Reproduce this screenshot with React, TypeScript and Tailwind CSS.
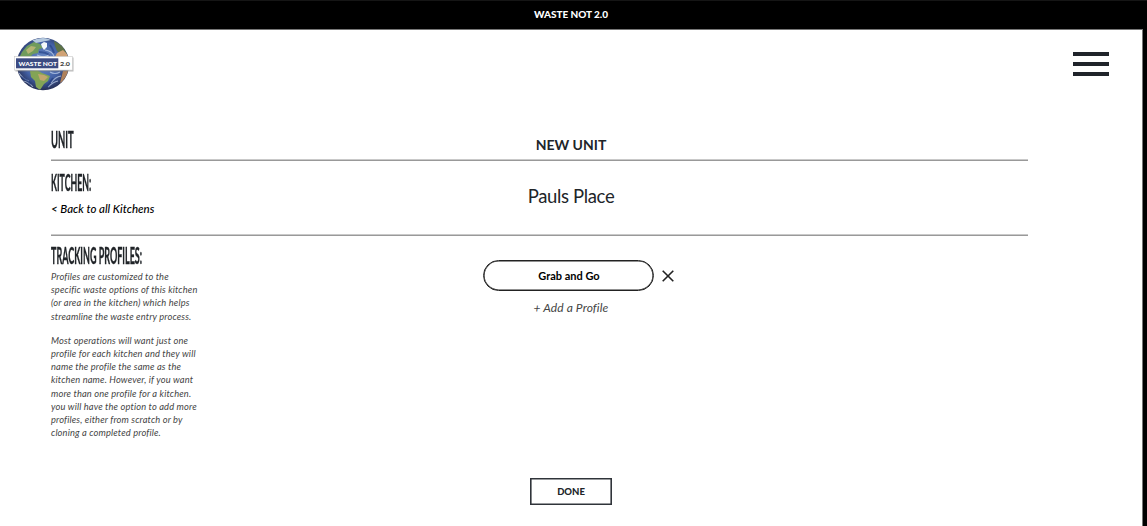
import type { ReactNode } from "react";

function Globe() {
  return (
    <svg viewBox="0 0 60 54" className="h-[54px] w-[60px]" aria-label="Waste Not 2.0">
      <defs>
        <radialGradient id="sea" cx="50%" cy="45%" r="55%">
          <stop offset="0" stopColor="#7394cb" />
          <stop offset="0.65" stopColor="#4361a6" />
          <stop offset="1" stopColor="#262f55" />
        </radialGradient>
        <clipPath id="disc"><circle cx="29" cy="27" r="26" /></clipPath>
        <filter id="soft"><feGaussianBlur stdDeviation="0.5" /></filter>
      </defs>
      <circle cx="29" cy="27" r="26.3" fill="url(#sea)" />
      <g clipPath="url(#disc)">
        <g filter="url(#soft)">
          <path d="M8 15l5-6 7-4 6 2 3 4-4 1-1 4-5 1-3 3-4 1-3 3-4-3z" fill="#6f9b5c" />
          <path d="M12 13l5-4 5 1-3 4-5 3z" fill="#b5b473" />
          <path d="M18 3l8-2 6 0 5 2-5 1-5 1-5 1z" fill="#b5c9de" />
          <path d="M27 7l3-2 3 1 0 4-3 3-2-3z" fill="#f4f8fb" />
          <path d="M40 4l9 5 5 8-6 1-5-4-2-5z" fill="#5d7247" />
          <path d="M43 16l6-3 6 6v6H42l-1-5z" fill="#d0a274" />
          <path d="M16 34l7-1 5 3 8 3-2 5-4 3-4 6-4-3-1-6-4-4z" fill="#83a457" />
          <path d="M24 37l6 1 4 2-4 4-4-1z" fill="#c3a66d" />
          <path d="M49 34l6-1-4 10-5 3z" fill="#ae815b" />
          <path d="M23 18q8 4 13-1M31 13q7 1 9 6M5 36q4 6 10 8M37 46q4-6 10-7M34 50q5-5 10-6M36 35q5 3 10 0M8 44q6 0 11 6" fill="none" stroke="#c4d4ed" strokeWidth="1.1" opacity="0.7" />
          <path d="M25 15q6 0 11 3M36 8q3 4 4 8M7 40q5 2 10 7M39 41l-6 9" fill="none" stroke="#223a80" strokeWidth="2" opacity="0.6" />
        </g>
      </g>
      <rect x="1.5" y="20.5" width="58" height="14" fill="#777" opacity="0.5" />
      <rect x="0.5" y="19.5" width="58" height="13.6" fill="#fff" stroke="#c8c8c8" strokeWidth="0.6" />
      <rect x="2" y="21.3" width="42.3" height="10" fill="#3c4b82" />
      <text x="4.5" y="28.6" textLength="38.5" lengthAdjust="spacingAndGlyphs" fontFamily="Lato, sans-serif" fontWeight="900" fontSize="6.4" fill="#fff">WASTE NOT</text>
      <text x="46" y="28.6" textLength="10" lengthAdjust="spacingAndGlyphs" fontFamily="Lato, sans-serif" fontWeight="900" fontSize="6.4" fill="#444">2.0</text>
    </svg>
  );
}

function Row({ left, children, className }: { left: ReactNode; children: ReactNode; className: string }) {
  return (
    <section className={`grid grid-cols-[152px_736px_89px] ${className}`}>
      <div className="whitespace-nowrap">{left}</div>
      <div className="flex flex-col items-center">{children}</div>
    </section>
  );
}

function Rule() {
  return <div className="h-[2px] w-full border-t border-b border-t-[#c9c9c9] border-b-[#999999]" />;
}

const condensed = "block w-max origin-left text-[22.5px] leading-[22px] font-bold [-webkit-text-stroke:0.4px_#212529]";

export default function App() {
  return (
    <div className="h-[526px] w-[1147px] overflow-hidden bg-black font-['Lato',sans-serif] text-[#212529]">
      <header className="flex h-[29px] items-center justify-center border-t border-t-[#151515] pr-[5px] pb-[2px] text-[10px] font-black tracking-[-0.05px] text-white">
        <span>WASTE NOT 2.0</span>
      </header>
      <div className="h-[497px] w-[1143px] border-t border-r border-t-[#777777] border-r-[#777777] bg-white">
        <nav className="flex h-[94px] justify-between pt-[7px] pr-[33px] pl-[14px]">
          <Globe />
          <div className="flex w-9 flex-col gap-[6px] pt-[15px]">
            <div className="h-1 bg-[#20242a]" />
            <div className="h-1 bg-[#20242a]" />
            <div className="h-1 bg-[#20242a]" />
          </div>
        </nav>
        <main className="ml-[51px] w-[977px]">
          <Row className="h-[35px] pt-[5px]" left={<h2 className={`${condensed} scale-x-[0.42]`}>UNIT</h2>}>
            <h1 className="pt-[6px] text-[14px] leading-[20px] font-bold">NEW UNIT</h1>
          </Row>
          <Rule />
          <Row
            className="h-[73px] pt-[11px]"
            left={
              <>
                <h2 className={`${condensed} scale-x-[0.39]`}>KITCHEN:</h2>
                <a className="mt-[7px] block text-[11.5px] leading-4 font-medium text-black italic">&lt; Back to all Kitchens</a>
              </>
            }
          >
            <p className="pt-[12px] text-[18.5px] leading-6 tracking-[-0.35px]">Pauls Place</p>
          </Row>
          <Rule />
          <Row
            className="h-[242px] pt-[9px]"
            left={
              <>
                <h2 className={`${condensed} scale-x-[0.4]`}>TRACKING PROFILES:</h2>
                <div className="mt-[3px] text-[9.3px] leading-[13.2px] tracking-[0.15px] text-[#444444] italic">
                  <p>Profiles are customized to the<br />specific waste options of this kitchen<br />(or area in the kitchen) which helps<br />streamline the waste entry process.</p>
                  <p className="mt-[11px]">Most operations will want just one<br />profile for each kitchen and they will<br />name the profile the same as the<br />kitchen name. However, if you want<br />more than one profile for a kitchen.<br />you will have the option to add more<br />profiles, either from scratch or by<br />cloning a completed profile.</p>
                </div>
              </>
            }
          >
            <div className="mt-[15px] flex items-center gap-2 pl-[14px]">
              <button className="h-[31px] w-[171px] rounded-full border border-[#222222] pt-px pl-[2px] text-[11px] font-bold text-black shadow-[inset_0_0_0_0.6px_#222222]">Grab and Go</button>
              <svg viewBox="0 0 12 12" className="h-3 w-3" fill="none" stroke="#222" strokeWidth="1.6"><path d="M.7.7l10.6 10.6M11.3.7L.7 11.3" /></svg>
            </div>
            <a className="mt-[9px] text-[12px] leading-4 tracking-[0.12px] text-[#444444] italic">+ Add a Profile</a>
          </Row>
          <div className="grid grid-cols-[152px_736px_89px]">
            <button className="col-start-2 h-[27px] w-[82px] justify-self-center border border-[#30343a] pt-px text-[9.5px] font-black shadow-[inset_0_0_0_0.6px_#30343a]">DONE</button>
          </div>
        </main>
      </div>
    </div>
  );
}
